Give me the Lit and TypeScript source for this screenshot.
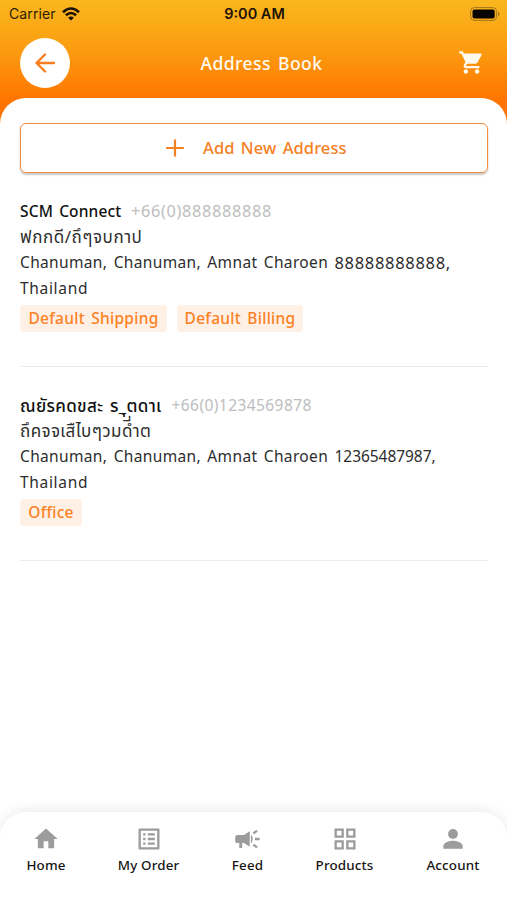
import { LitElement, html, css, svg } from "lit";
import { customElement, property } from "lit/decorators.js";

interface Address {
  name: string;
  nameClass: string;
  phone: string;
  phoneClass: string;
  street: string;
  streetClass: string;
  region: string;
  postcode: string;
  postcodeClass: string;
  country: string;
  tags: { label: string; cls: string }[];
}

const addresses: Address[] = [
  {
    name: "SCM Connect", nameClass: "n1", phone: "+66(0)888888888", phoneClass: "p1",
    street: "ฟกกดี/ถึๆจบกาป", streetClass: "s1",
    region: "Chanuman, Chanuman, Amnat Charoen", postcode: "88888888888,", postcodeClass: "z1", country: "Thailand",
    tags: [{ label: "Default Shipping", cls: "t1" }, { label: "Default Billing", cls: "t2" }],
  },
  {
    name: "ณยัรคดขสะ ร_ุตดาเ", nameClass: "n2", phone: "+66(0)1234569878", phoneClass: "p2",
    street: "ถึคจจเสืไบๆวมดํี่าต", streetClass: "s2",
    region: "Chanuman, Chanuman, Amnat Charoen", postcode: "12365487987,", postcodeClass: "z2", country: "Thailand",
    tags: [{ label: "Office", cls: "t3" }],
  },
];

const icons = {
  home: svg`<path d="M10 20v-6h4v6h5v-8h3L12 3 2 12h3v8z"/>`,
  order: svg`<path d="M19 5v14H5V5h14m1.1-2H3.9c-.5 0-.9.4-.9.9v16.2c0 .4.4.9.9.9h16.2c.4 0 .9-.5.9-.9V3.900c0-.5-.5-.9-.9-.9zM11 7h6v2h-6V7zm0 4h6v2h-6v-2zm0 4h6v2h-6zM7 7h2v2H7zm0 4h2v2H7zm0 4h2v2H7z"/>`,
  feed: svg`<path d="M18 11v2h4v-2h-4zm-2 6.610c.96.71 2.210 1.650 3.200 2.390.4-.53.8-1.070 1.200-1.600-.99-.74-2.240-1.680-3.200-2.400-.4.540-.8 1.080-1.200 1.610zM20.400 5.600c-.4-.53-.8-1.070-1.200-1.600-.99.740-2.240 1.680-3.200 2.400.4.530.8 1.070 1.200 1.600.96-.72 2.210-1.650 3.200-2.400zM3 8.500c-1.100 0-2 .9-2 2v3c0 1.100.9 2 2 2h1.500v4.200h2.500v-4.200h1.500l5 3.200V5.300l-5 3.200H3zm11.500 3.500m0-3.800v7.600c.9-.9 1.500-2.200 1.500-3.800s-.6-2.900-1.500-3.800z"/>`,
  products: svg`<path d="M3 3v8h8V3H3zm6 6H5V5h4v4zm-6 4v8h8v-8H3zm6 6H5v-4h4v4zm4-16v8h8V3h-8zm6 6h-4V5h4v4zm-6 4v8h8v-8h-8zm6 6h-4v-4h4v4z"/>`,
  account: svg`<ellipse cx="12" cy="7.700" rx="4.200" ry="4.200"/><path d="M12 13.600c-2.670 0-8.300 1.500-8.300 4.400v2.300h16.600V18c0-2.900-5.630-4.400-8.300-4.400z"/>`,
};

@customElement("address-card")
class AddressCard extends LitElement {
  @property({ attribute: false }) address!: Address;

  static styles = css`
    :host { display: block; height: 167px; border-bottom: 1px solid #ebebeb; }
    .line { display: flex; height: 25.7px; line-height: 25.7px; font-size: 15.5px; color: #2d2d2d; white-space: nowrap; }
    .name { color: #111; font-weight: 500; }
    .phone { color: #bdbdbd; margin-left: 9.500px; }
    .p1 { font-size: 16.300px; letter-spacing: 0.680px; }
    .p2 { letter-spacing: 0.430px; }
    .n1 { width: 101.500px; word-spacing: 2px; letter-spacing: 0.130px; }
    .n2 { width: 142px; font-size: 17px; letter-spacing: 0.330px; word-spacing: 2px; }
    .s1 { font-size: 17px; letter-spacing: 0.550px; }
    .s2 { font-size: 17px; letter-spacing: 0.400px; }
    .region { width: 314.500px; word-spacing: 2px; letter-spacing: 0.350px; }
    .z1 { font-size: 16.500px; letter-spacing: 0.680px; }
    .z2 { letter-spacing: -0.050px; }
    .country { letter-spacing: 0.680px; }
    .tags { display: flex; gap: 10px; margin-top: 4px; }
    .tag { display: flex; justify-content: center; height: 27px; line-height: 27px; border-radius: 4px; letter-spacing: 0.280px;
      background: #fff0e6; color: #fb811f; font-size: 15.5px; font-weight: 500; white-space: nowrap; word-spacing: 2px; }
    .t1 { width: 147px; }
    .t2 { width: 126px; }
    .t3 { width: 62px; }
  `;

  render() {
    const a = this.address;
    return html`
      <div class="line"><span class="name ${a.nameClass}">${a.name}</span><span class="phone ${a.phoneClass}">${a.phone}</span></div>
      <div class="line"><span class="${a.streetClass}">${a.street}</span></div>
      <div class="line"><span class="region">${a.region}</span><span class="${a.postcodeClass}">${a.postcode}</span></div>
      <div class="line"><span class="country">${a.country}</span></div>
      <div class="tags">${a.tags.map((t) => html`<span class="tag ${t.cls}">${t.label}</span>`)}</div>
    `;
  }
}

@customElement("app-root")
class AppRoot extends LitElement {
  static styles = css`
    :host { display: flex; flex-direction: column; width: 507px; height: 900px; overflow: hidden; box-sizing: border-box;
      background: linear-gradient(#f9b71e 0, #fc9c10 50px, #ff7500 100px, #ff7000 130px, #fff 130px);
      font-family: "Noto Sans", "Noto Sans Thai", "Liberation Sans", sans-serif; }
    .status { display: grid; grid-template-columns: 1fr auto 1fr; align-items: center; height: 27px; padding: 0 7px 0 9px;
      font-family: Inter, sans-serif; font-size: 14px; color: #2b1d05; }
    .carrier { display: flex; align-items: center; gap: 6px; letter-spacing: 0.1px; }
    .clock { font-weight: 600; color: #1c1203; font-size: 14.500px; }
    .battery { justify-self: end; }
    svg { display: block; }
    .bar { display: flex; align-items: center; justify-content: space-between; height: 71px; padding: 0 22px 0 20px; box-sizing: border-box; }
    .back { display: grid; place-items: center; width: 50px; height: 50px; border-radius: 50%; background: #fff; }
    .title { color: #fffaf0; font-size: 17.5px; font-weight: 500; word-spacing: 2px; letter-spacing: 0.450px; margin-right: 5px; }
    .sheet { flex: 1; background: #fff; border-radius: 26px 26px 0 0; padding: 25px 19.500px 0 20px; }
    .add { display: flex; align-items: center; box-sizing: border-box; height: 49.500px; padding-left: 145px; border: 1.500px solid #f08b3c; border-radius: 6px;
      box-shadow: 0 1.500px 2px rgba(0,0,0,.22); color: #f5801f; font-size: 16.500px; font-weight: 500; word-spacing: 2px; gap: 19px; letter-spacing: 0.070px; }
    .list { display: flex; flex-direction: column; gap: 26px; margin-top: 26px; }
    .nav { display: flex; justify-content: space-between; box-sizing: border-box; height: 88px; padding: 13px 27px 0; background: #fff;
      border-radius: 26px 26px 0 0; box-shadow: 0 -3px 12px rgba(0,0,0,.07); }
    .item { display: flex; flex-direction: column; align-items: center; font-size: 13.400px; font-weight: 500; color: #161616; line-height: 20px; white-space: nowrap; letter-spacing: 0.150px; }
    .item svg { fill: #9c9c9c; margin-bottom: 2px; }
    .home { width: 38px; } .order { width: 63px; } .feed { width: 31px; } .products { width: 59px; } .account { width: 54px; }
  `;

  render() {
    const items: [keyof typeof icons, string][] = [
      ["home", "Home"], ["order", "My Order"], ["feed", "Feed"], ["products", "Products"], ["account", "Account"],
    ];
    return html`
      <div class="status">
        <span class="carrier">Carrier
          <svg width="18" height="14" viewBox="0 0 18 14" fill="none" stroke="#1a1204" stroke-width="2.600"><path d="M1 5.200Q9-2.200 17 5.200M3.900 8.300Q9 3.700 14.100 8.300"/><path d="M9 13.600 6.100 10.700Q9 8.200 11.900 10.700Z" fill="#1a1204" stroke="none"/></svg>
        </span>
        <span class="clock">9:00 AM</span>
        <svg class="battery" width="30" height="14" viewBox="0 0 30 14"><rect x=".6" y=".6" width="26" height="12.800" rx="3.800" fill="none" stroke="#a1761c"/><rect x="2.500" y="2.500" width="22.200" height="9" rx="2" fill="#080500"/><path d="M28 4.800v4.400q1.600-.6 1.600-2.200t-1.600-2.200" fill="#a1761c"/></svg>
      </div>
      <div class="bar">
        <div class="back"><svg width="20" height="20" viewBox="0 0 20 20" fill="none" stroke="#f87c1c" stroke-width="2.300" stroke-linecap="round" stroke-linejoin="round"><path d="M19 10H1.500M10 1.500 1.500 10l8.500 8.500"/></svg></div>
        <span class="title">Address Book</span>
        <svg width="27" height="27" viewBox="0 0 24 24" fill="#fffaf0"><path d="M7 18c-1.100 0-1.990.9-1.990 2S5.900 22 7 22s2-.9 2-2-.9-2-2-2zM1 2v2h2l3.600 7.590-1.350 2.450c-.16.280-.25.610-.25.960 0 1.100.9 2 2 2h12v-2H7.420c-.14 0-.25-.11-.25-.25l.03-.12.9-1.630h7.450c.75 0 1.410-.41 1.750-1.030l3.580-6.490A1 1 0 0 0 20 4H5.210l-.94-2H1zm16 16c-1.100 0-1.990.9-1.990 2s.89 2 1.990 2 2-.9 2-2-.9-2-2-2z"/></svg>
      </div>
      <div class="sheet">
        <div class="add"><svg width="18" height="20" viewBox="1 0 18 20" stroke="#f5801f" stroke-width="2.200"><path d="M10 1.500v17M1.200 10h17.600"/></svg><span class="add-label">Add New Address</span></div>
        <div class="list">${addresses.map((a) => html`<address-card .address=${a}></address-card>`)}</div>
      </div>
      <div class="nav">${items.map(([k, label]) => html`<div class="item ${k}"><svg width="28" height="28" viewBox="0 0 24 24">${icons[k]}</svg><span>${label}</span></div>`)}</div>
    `;
  }
}
